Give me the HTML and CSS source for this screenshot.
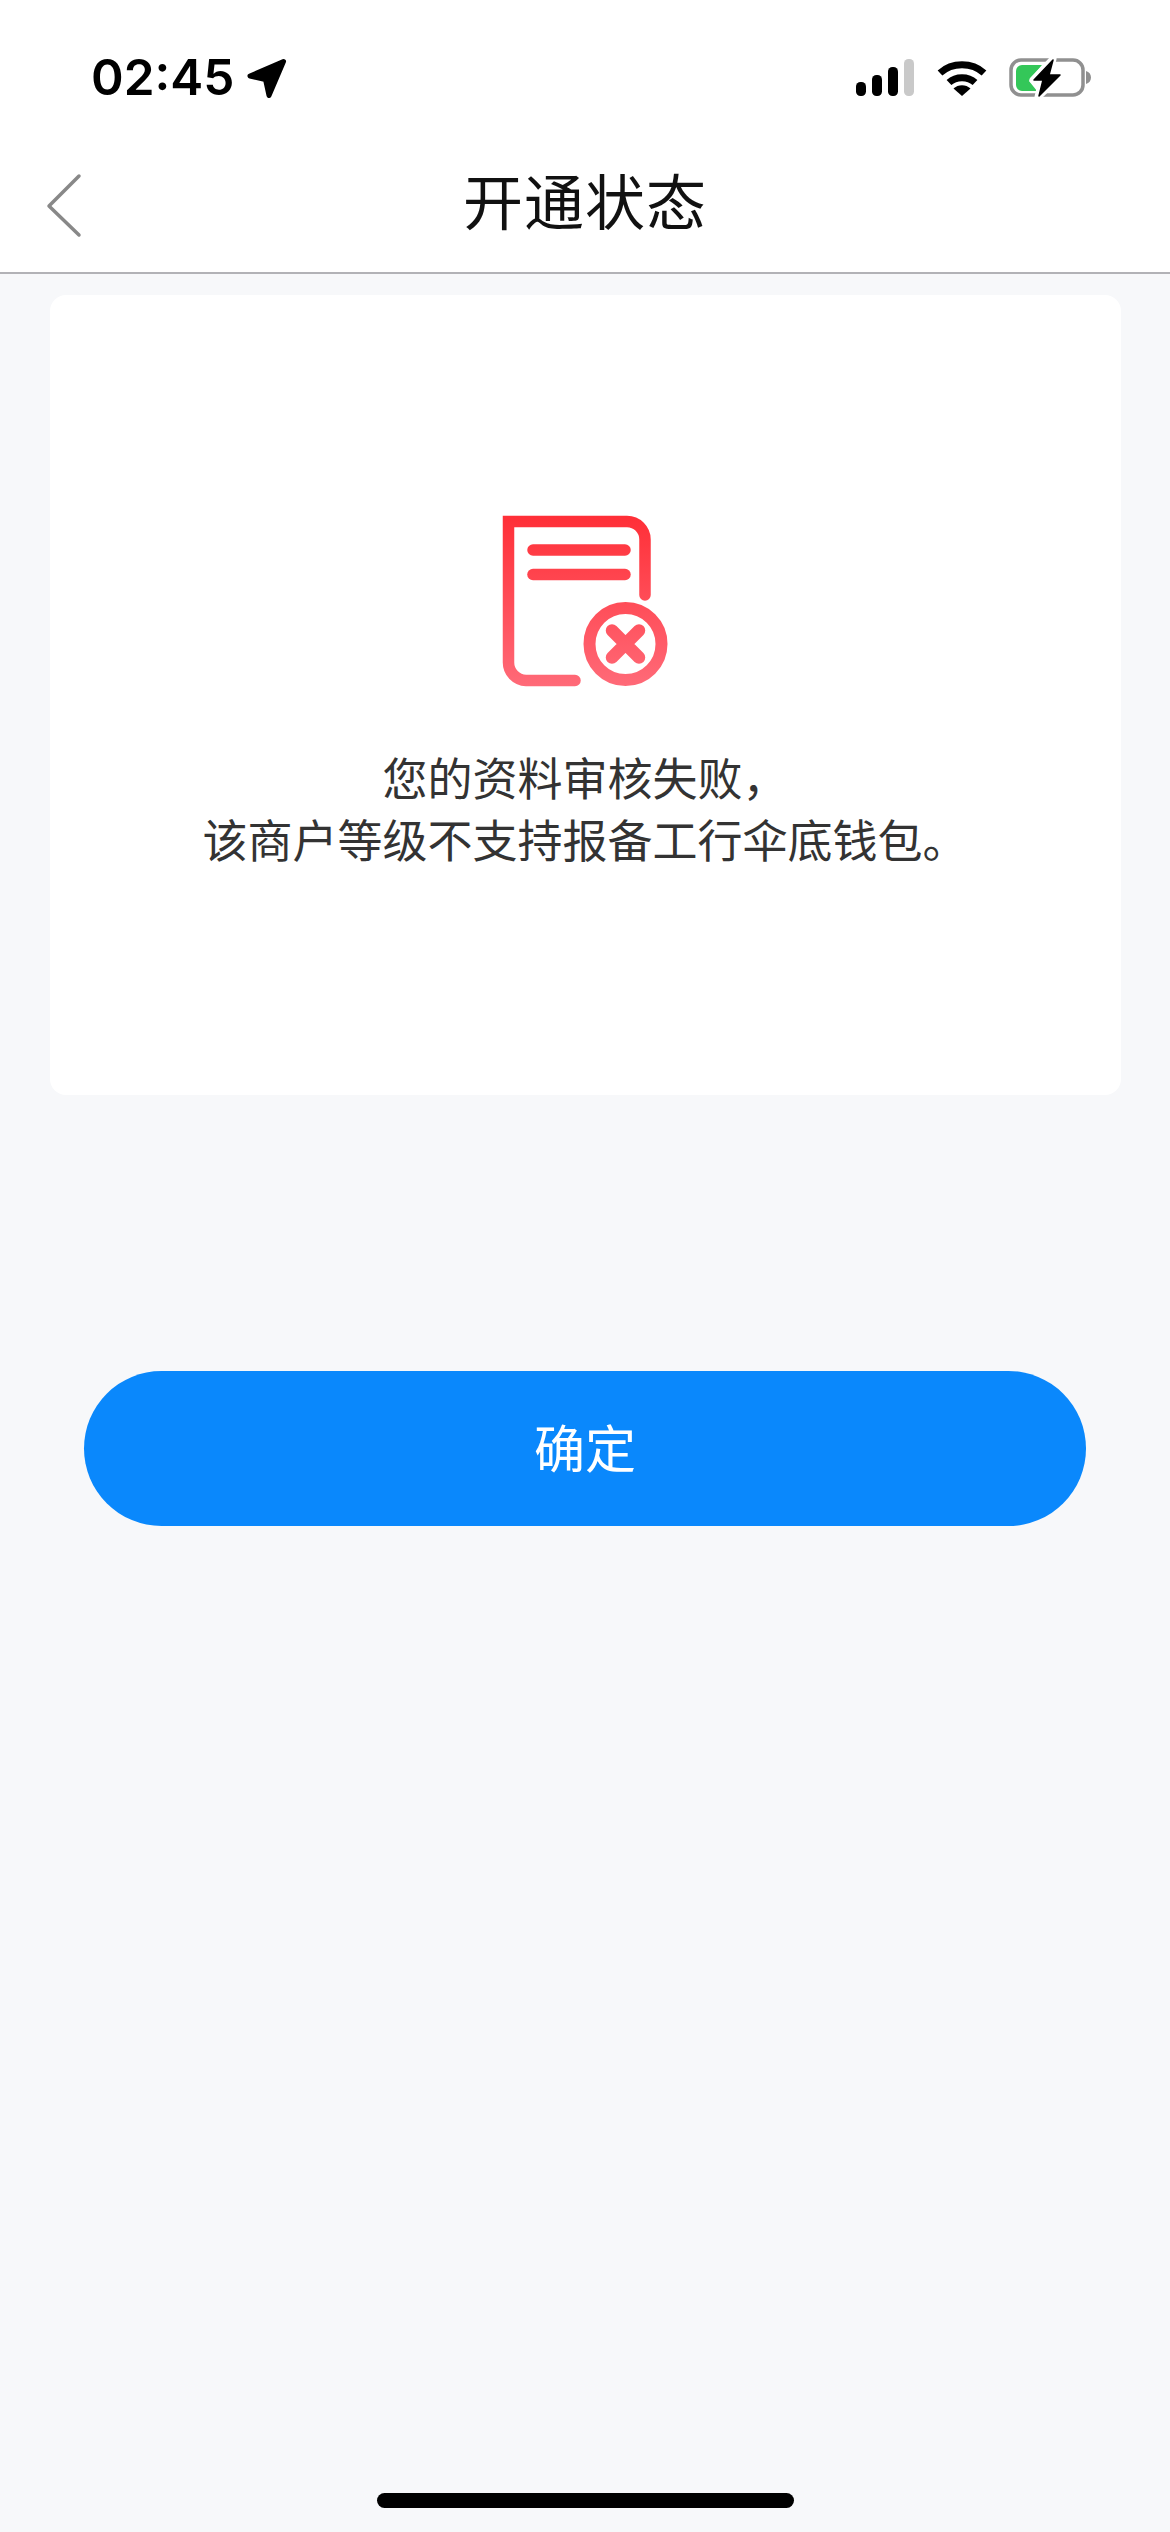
FILE: index.html
```html
<!DOCTYPE html>
<html lang="zh-CN">
<head>
<meta charset="utf-8">
<title>开通状态</title>
<link rel="stylesheet" href="styles.css">
</head>
<body>
<div class="page">
  <header class="status">
    <div class="status-left">
      <span class="time">02:45</span>
      <svg class="loc" width="40" height="40" viewBox="0 0 40 40"><path d="M36.500 3.500 L3 18 L18.500 21.500 L22 37.500 Z" fill="#000" stroke="#000" stroke-width="5" stroke-linejoin="round"/></svg>
    </div>
    <div class="status-right">
      <svg class="signal" width="58" height="37" viewBox="0 0 58 37">
        <rect x="0" y="23" width="10" height="14" rx="4.500" fill="#000"/>
        <rect x="16" y="16" width="10" height="21" rx="4.500" fill="#000"/>
        <rect x="32" y="8" width="10" height="29" rx="4.500" fill="#000"/>
        <rect x="48" y="0" width="10" height="37" rx="4.500" fill="#c9c9c9"/>
      </svg>
      <svg class="wifi" width="50" height="37" viewBox="0 0 50 37">
        <path d="M3 14 C15 3 35 3 47 14" fill="none" stroke="#000" stroke-width="7"/>
        <path d="M12 23.500 C19 17 31 17 38 23.500" fill="none" stroke="#000" stroke-width="7"/>
        <path d="M25 37 L16.500 29.500 C21 25 29 25 33.500 29.500 Z" fill="#000"/>
      </svg>
      <svg class="battery" width="84" height="40" viewBox="0 0 84 40">
        <rect x="2" y="2" width="72" height="35" rx="10" fill="#fff" stroke="#909090" stroke-width="3.500"/>
        <path d="M7 13 a6 6 0 0 1 6 -6 H33 L20 23 L28 33 H13 a6 6 0 0 1 -6 -6 Z" fill="#34c759"/>
        <path d="M77 13 C80 14 82 16 82 19.500 C82 23 80 25 77 26 Z" fill="#909090"/>
        <path d="M44 1 L24 22 H33 L29 39 L52 17 H40 Z" fill="#fff" stroke="#fff" stroke-width="7" stroke-linejoin="round"/>
        <path d="M44 2 L25 22 H34 L30 38 L51 17 H40 Z" fill="#000" stroke="#000" stroke-width="1.500" stroke-linejoin="round"/>
      </svg>
    </div>
  </header>

  <nav class="nav">
    <svg class="back" width="40" height="70" viewBox="0 0 40 70"><path d="M35 5 L5 35 L35 64" fill="none" stroke="#888" stroke-width="3.500" stroke-linecap="round" stroke-linejoin="round"/></svg>
    <h1 class="title">开通状态</h1>
    <span class="nav-end"></span>
  </nav>

  <main class="content">
    <section class="card">
      <svg class="fail-icon" width="200" height="200" viewBox="0 0 200 200">
        <defs>
          <linearGradient id="red" gradientUnits="userSpaceOnUse" x1="0" y1="16" x2="0" y2="186">
            <stop offset="0" stop-color="#ff2f37"/>
            <stop offset="1" stop-color="#ff6a78"/>
          </linearGradient>
        </defs>
        <g fill="none" stroke="url(#red)" stroke-width="11.500" stroke-linecap="round">
          <path d="M95 180.500 H46 A18 18 0 0 1 28.500 162.500 V21.500 H147 A18 18 0 0 1 165 39.500 V95"/>
          <path d="M53 50 H145"/>
          <path d="M53 74.500 H145"/>
          <circle cx="145.500" cy="144" r="36" stroke-linecap="butt" stroke-width="12"/>
          <path d="M132 130.500 L159 157.500 M159 130.500 L132 157.500" stroke-width="12.500"/>
        </g>
      </svg>
      <p class="msg">您的资料审核失败，<br>该商户等级不支持报备工行伞底钱包。</p>
    </section>
    <button class="confirm" type="button">确定</button>
  </main>

  <div class="home"></div>
</div>
</body>
</html>
```
FILE: styles.css
```css
* { box-sizing: border-box; }
html, body { margin: 0; padding: 0; }
body {
  width: 1170px;
  height: 2532px;
  overflow: hidden;
  background: #f7f8fa;
  font-family: "Noto Sans CJK SC", "Liberation Sans", sans-serif;
}
.page {
  display: flex;
  flex-direction: column;
  height: 2532px;
}
.status {
  height: 135px;
  background: #fff;
  display: flex;
  justify-content: space-between;
  align-items: flex-start;
  padding: 57px 77px 0 91px;
}
.status-left {
  display: flex;
  align-items: center;
  gap: 13px;
  height: 41px;
}
.time {
  font-family: Inter, "Liberation Sans", sans-serif;
  font-weight: 600;
  font-size: 49.500px;
  line-height: 41px;
  color: #000;
}
.status-right {
  display: flex;
  align-items: flex-start;
  padding-top: 2px;
}
.signal { margin-right: 23px; }
.wifi { margin-right: 22px; }
.battery { margin-top: -1px; }
.nav {
  height: 139px;
  background: #fff;
  border-bottom: 2px solid #b2b2b6;
  display: grid;
  grid-template-columns: 1fr auto 1fr;
  align-items: center;
  padding: 0 44px 0 44px;
}
.back { margin-top: 5px; }
.title {
  margin: 0 0 9px;
  font-weight: 400;
  font-size: 60px;
  line-height: 80px;
  letter-spacing: 1px;
  color: #111;
}
.content {
  display: flex;
  flex-direction: column;
  align-items: center;
}
.card {
  width: 1071px;
  height: 800px;
  margin-top: 21px;
  background: #fff;
  border-radius: 16px;
  display: flex;
  flex-direction: column;
  align-items: center;
  padding-top: 205px;
}
.fail-icon { margin-right: 10px; }
.msg {
  margin: 46px 0 0;
  font-size: 45px;
  line-height: 62px;
  color: #333;
  text-align: center;
  font-weight: 400;
}
.confirm {
  width: 1002px;
  height: 155px;
  margin-top: 276px;
  border: 0;
  border-radius: 78px;
  background: #0a88fc;
  color: #fff;
  font-family: inherit;
  font-size: 51px;
  font-weight: 400;
  padding: 0 0 6px;
}
.home {
  width: 417px;
  height: 15px;
  border-radius: 8px;
  background: #000;
  margin: auto 0 24px 377px;
}
```
